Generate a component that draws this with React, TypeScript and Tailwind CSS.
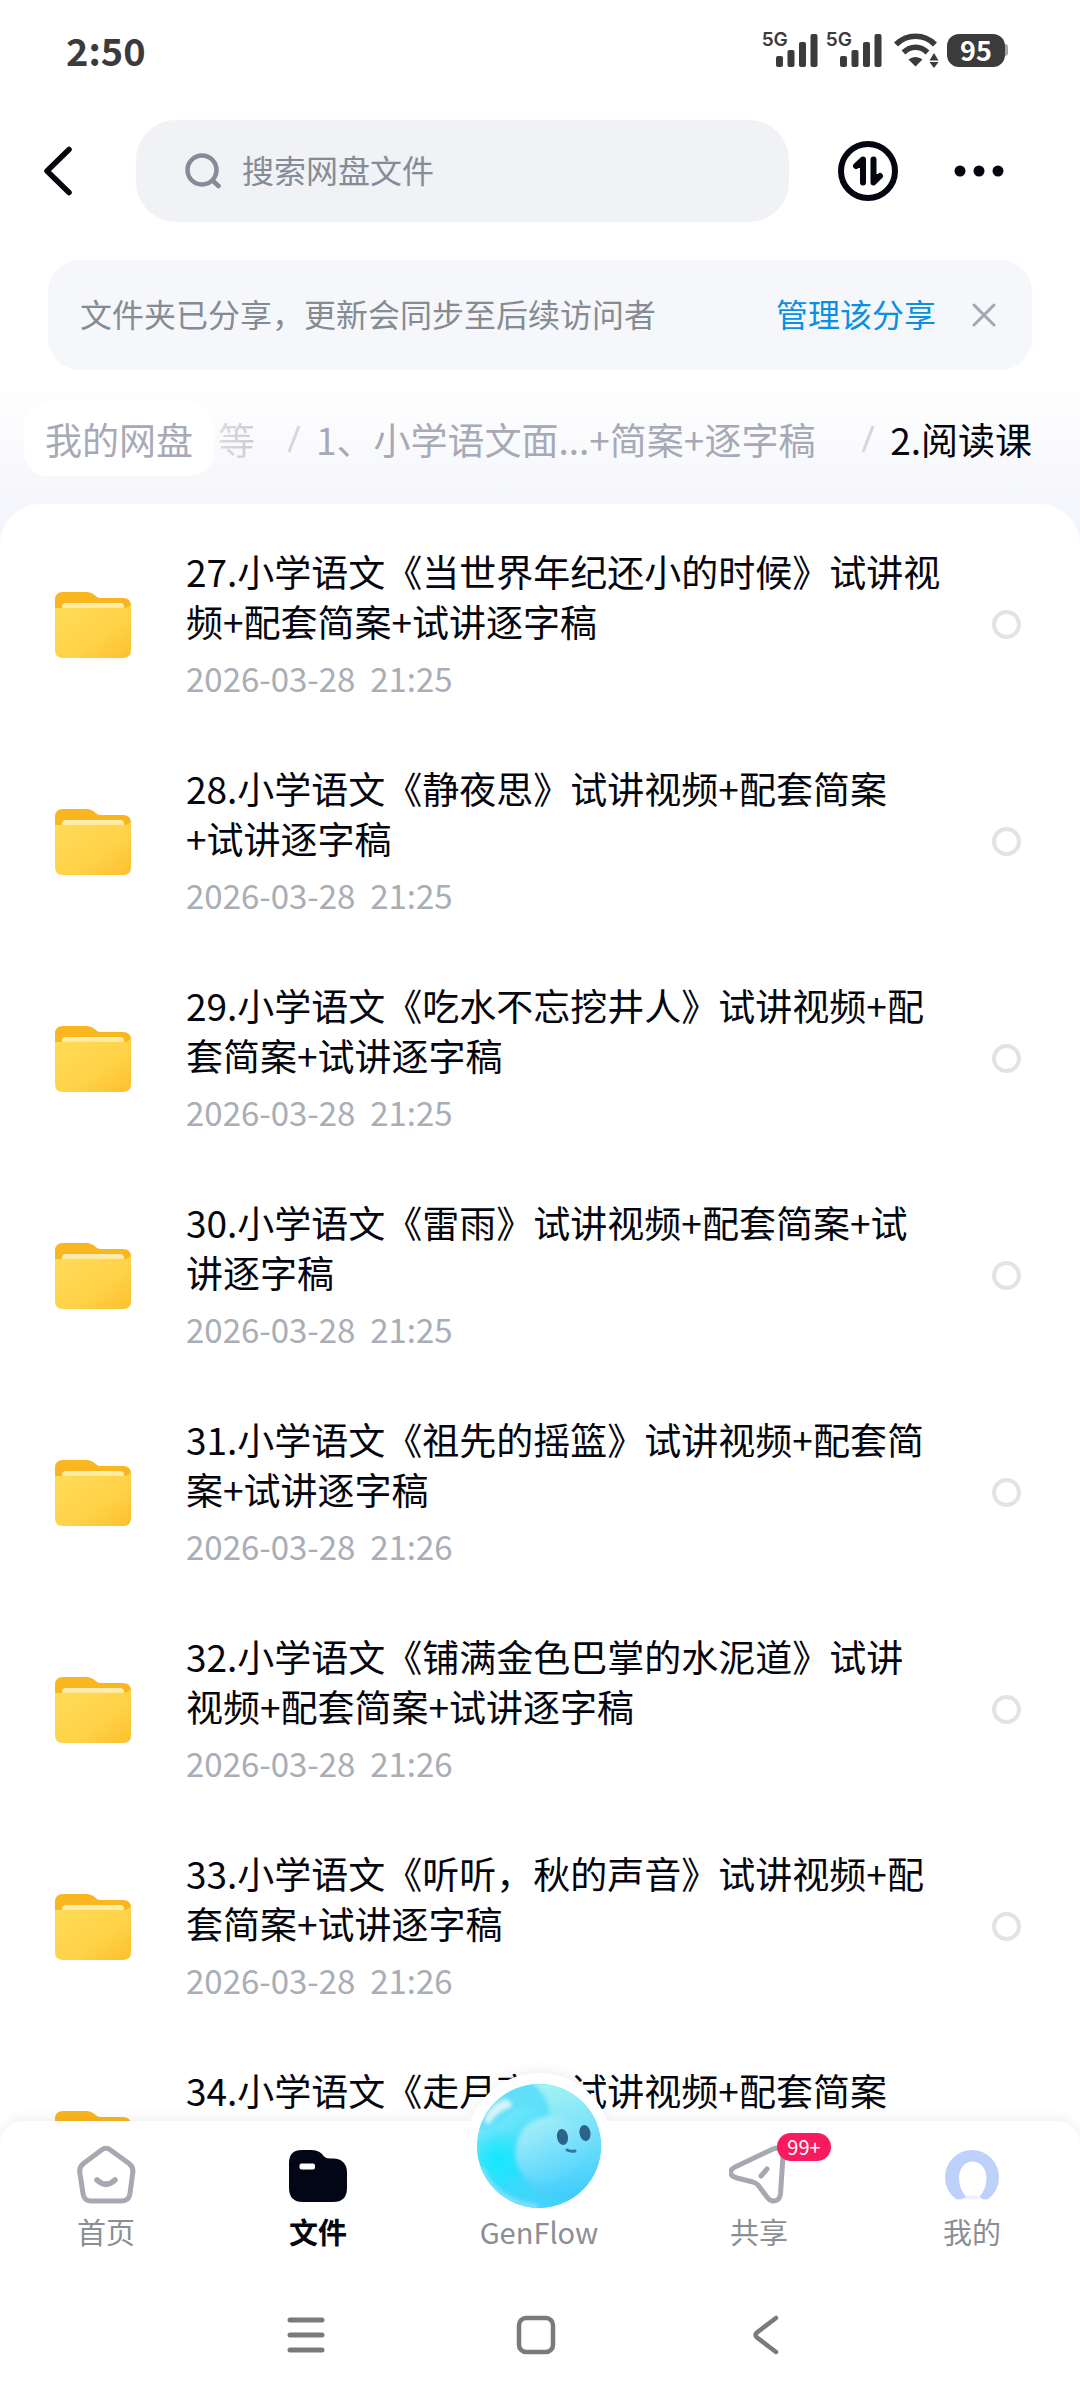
import { useState } from "react";

const files = [
  { id: 27, name: "27.小学语文《当世界年纪还小的时候》试讲视频+配套简案+试讲逐字稿", time: "2026-03-28  21:25" },
  { id: 28, name: "28.小学语文《静夜思》试讲视频+配套简案+试讲逐字稿", time: "2026-03-28  21:25" },
  { id: 29, name: "29.小学语文《吃水不忘挖井人》试讲视频+配套简案+试讲逐字稿", time: "2026-03-28  21:25" },
  { id: 30, name: "30.小学语文《雷雨》试讲视频+配套简案+试讲逐字稿", time: "2026-03-28  21:25" },
  { id: 31, name: "31.小学语文《祖先的摇篮》试讲视频+配套简案+试讲逐字稿", time: "2026-03-28  21:26" },
  { id: 32, name: "32.小学语文《铺满金色巴掌的水泥道》试讲\n视频+配套简案+试讲逐字稿", time: "2026-03-28  21:26" },
  { id: 33, name: "33.小学语文《听听，秋的声音》试讲视频+配套简案+试讲逐字稿", time: "2026-03-28  21:26" },
  { id: 34, name: "34.小学语文《走月亮》试讲视频+配套简案+试讲逐字稿", time: "2026-03-28  21:26" },
];

const Signal = () => (
  <div className="flex items-end">
    <span className="-mr-3 self-start font-['Inter'] text-[19px] leading-4 font-semibold">5G</span>
    <svg className="h-9 w-[42px]" viewBox="0 0 42 36" fill="currentColor">
      <rect x="0" y="24" width="7" height="11" rx="2" />
      <rect x="11.500" y="18" width="7" height="17" rx="2" />
      <rect x="23" y="10" width="7" height="25" rx="2" />
      <rect x="34.500" y="2" width="7" height="33" rx="2" />
    </svg>
  </div>
);

const StatusBar = () => (
  <div className="flex h-25 items-center justify-between pr-[72px] pl-[66px] text-[#3b3b3b]">
    <span className="text-[38px] leading-10 font-bold">2:50</span>
    <div className="flex items-center">
      <div className="flex gap-2">
        <Signal />
        <Signal />
      </div>
      <svg className="ml-3 h-9 w-[45px]" viewBox="0 0 45 36" fill="none" stroke="currentColor" strokeWidth="5.500">
        <path d="M2 12.500C13 1.500 30 1.500 41 12.500" />
        <path d="M9.500 20.500C16.500 13.500 26.500 13.500 33.500 20.500" />
        <path d="M14.500 27.500C19 24 24 24 28.500 27.500L21.500 34.500Z" fill="currentColor" stroke="none" />
        <path d="M35.500 28.500L40 21L44.500 28.500Z M35.500 30L40 36L44.500 30Z" fill="currentColor" stroke="none" />
      </svg>
      <div className="ml-2 flex items-center">
        <span className="flex h-[33px] w-[58px] items-center justify-center rounded-xl bg-[#3b3b3b] text-[27px] leading-8 font-bold text-white">
          95
        </span>
        <span className="h-3 w-[3px] rounded-r-sm bg-[#a5a5a5]" />
      </div>
    </div>
  </div>
);

const SearchRow = () => (
  <div className="mt-5 flex h-[102px] items-center pr-[72px] pl-9">
    <button type="button" aria-label="返回" className="flex h-16 w-11 items-center justify-center">
      <svg className="h-[50px] w-[30px]" viewBox="0 0 30 50" fill="none" stroke="#06070c" strokeWidth="5.500" strokeLinecap="round" strokeLinejoin="round">
        <path d="M26 3.500L4 25L26 46.500" />
      </svg>
    </button>
    <label className="ml-14 flex h-full flex-1 items-center rounded-[40px] bg-[#f0f2f6] pl-[49px]">
      <svg className="h-9 w-9" viewBox="0 0 36 36" fill="none" stroke="#868b96" strokeWidth="4.500" strokeLinecap="round">
        <circle cx="17" cy="17" r="14.500" />
        <path d="M27.500 27.500L33.500 33" />
      </svg>
      <input
        type="search"
        placeholder="搜索网盘文件"
        className="ml-[21px] w-full min-w-0 flex-1 bg-transparent pb-1 text-[32px] leading-10 outline-none placeholder:text-[#868b96]"
      />
    </label>
    <button type="button" aria-label="传输列表" className="ml-[49px]">
      <svg className="h-[60px] w-[60px]" viewBox="0 0 60 60" fill="none" stroke="#04060f" strokeLinecap="round" strokeLinejoin="round">
        <circle cx="30" cy="30" r="27" strokeWidth="6" />
        <path d="M25 41.500V18.500L18 25" strokeWidth="6" />
        <path d="M22 20L25 17V26H18Z" fill="#04060f" strokeWidth="2" />
        <path d="M35.500 18.500V41.500L42 35" strokeWidth="6" />
        <path d="M38 40L35.500 42V34H42Z" fill="#04060f" strokeWidth="2" />
      </svg>
    </button>
    <button type="button" aria-label="更多" className="ml-[54px]">
      <svg className="h-[60px] w-14" viewBox="0 0 56 60" fill="#04060f">
        <circle cx="8" cy="30" r="5.500" />
        <circle cx="27" cy="30" r="5.500" />
        <circle cx="46" cy="30" r="5.500" />
      </svg>
    </button>
  </div>
);

const ShareBanner = () => (
  <div className="mx-12 mt-[38px] flex h-[110px] items-center rounded-[32px] bg-[#f5f7fa] pr-[36px] pl-8 text-[32px] leading-10">
    <p className="flex-1 pb-1 text-[#868b93]">文件夹已分享，更新会同步至后续访问者</p>
    <a href="#share" className="pb-1 text-[#0a8fe6]">管理该分享</a>
    <button type="button" aria-label="关闭" className="ml-9">
      <svg className="h-6 w-6" viewBox="0 0 24 24" fill="none" stroke="#a3a7b2" strokeWidth="3" strokeLinecap="round">
        <path d="M2 2L22 22M22 2L2 22" />
      </svg>
    </button>
  </div>
);

const Slash = () => (
  <svg className="h-7 w-3.5 shrink-0" viewBox="0 0 14 28" fill="none" stroke="#d5d7de" strokeWidth="3">
    <path d="M12 1L2 27" />
  </svg>
);

const Breadcrumb = () => (
  <nav className="mt-2 flex h-[126px] items-center bg-linear-to-b from-white to-[#f5f6fb] pr-12 pb-1 pl-6 text-[37px] leading-[50px] whitespace-nowrap text-[#a7aab6]">
    <a href="#root" className="rounded-3xl bg-white px-[21px] py-3">我的网盘</a>
    <span className="bg-linear-to-r from-[#dcdde2] to-[#cbcdd4] bg-clip-text pl-1 text-transparent">等</span>
    <div className="flex flex-1 items-center justify-between pl-8">
      <Slash />
      <a href="#parent">1、小学语文面...+简案+逐字稿</a>
      <span className="w-4" />
      <Slash />
      <span className="text-[#05060e]">2.阅读课</span>
    </div>
  </nav>
);

const FolderIcon = () => (
  <svg className="h-[68px] w-[76px] shrink-0" viewBox="0 0 76 68">
    <defs>
      <linearGradient id="folder-front" x1="0" y1="0" x2="1" y2="1">
        <stop offset="0" stopColor="#ffdc58" />
        <stop offset="0.600" stopColor="#ffd248" />
        <stop offset="1" stopColor="#fcc02c" />
      </linearGradient>
      <linearGradient id="folder-paper" x1="0" y1="0" x2="0" y2="1">
        <stop offset="0" stopColor="#fff0b8" />
        <stop offset="1" stopColor="#ffdf74" />
      </linearGradient>
    </defs>
    <path d="M0 22V9Q0 1 8 1H32Q36 1 39 3.500L42 6Q43.500 7 46 7H68Q76 7 76 15V24H0Z" fill="#fab61e" />
    <path d="M7 22V16Q7 12 11 12H65Q69 12 69 16V22Z" fill="url(#folder-paper)" />
    <path d="M0 17H68Q74 17 76 13V59Q76 67 68 67H8Q0 67 0 59Z" fill="url(#folder-front)" />
  </svg>
);

const FileRow = ({ id, name, time }: { id: number; name: string; time: string }) => (
  <li className="flex items-center py-[30px] pr-[59px] pl-[55px]">
    <FolderIcon />
    <div className="ml-[55px] min-w-0 flex-1 pb-1">
      <label htmlFor={`file-${id}`} className="block text-[37px] leading-[50px] whitespace-pre-line text-[#05060e]">{name}</label>
      <p className="mt-3 text-[33px] leading-[41px] whitespace-pre text-[#a9adb5]">{time}</p>
    </div>
    <input
      id={`file-${id}`}
      type="checkbox"
      className="ml-12 h-[29px] w-[29px] shrink-0 appearance-none rounded-full border-4 border-[#e3e3e3] checked:border-[#0a8fe6] checked:bg-[#0a8fe6]"
    />
  </li>
);

const HomeIcon = () => (
  <svg className="h-15 w-15" viewBox="0 0 60 60" fill="none" stroke="#a6a9b2" strokeWidth="5" strokeLinecap="round" strokeLinejoin="round">
    <path d="M25.500 5Q30 1.500 34.500 5L53 18.500Q57.500 22 56.800 27.500L54 48.500Q53 56 45.500 56H15Q8 56 7 48.500L3.800 27.500Q3 22 7.500 18.500Z" />
    <path d="M21 35Q30 43.500 39 35" strokeWidth="5.500" />
  </svg>
);

const FilesIcon = () => (
  <svg className="h-15 w-15" viewBox="0 0 60 60">
    <path d="M1 18Q1 5 14 5H23Q30 5 34 9L36 11.500Q38 13.500 42 13.500H45Q59 14 59 28V43Q59 57 45 57H15Q1 57 1 43Z" fill="#030614" />
    <rect x="11.500" y="18.500" width="15.500" height="6" rx="2" fill="#fff" />
  </svg>
);

const ShareIcon = () => (
  <svg className="h-15 w-15" viewBox="0 0 60 60" fill="none" stroke="#a6a9b2" strokeWidth="5" strokeLinecap="round" strokeLinejoin="round">
    <path d="M6 22L44 4Q54 0 54 11L51.500 49Q50.500 56 44.500 56Q41 56 38 52L29 40Q27 38 24 37L8 33Q1.500 31 1.500 27Q2 24 6 22Z" />
    <path d="M32 31L38 24" />
  </svg>
);

const ProfileIcon = () => (
  <svg className="h-15 w-15" viewBox="0 0 60 60">
    <path d="M20 53Q30 47 40 53Q30 56 20 53Z" fill="#edf1fb" />
    <path d="M14 54Q3 46 3 32A27 27 0 0 1 57 32Q57 46 46 54Q41 56 37.500 51.500Q44.500 44 44.500 33C44.500 23 38 16.500 30.500 16.500S17 23 17 33Q17 44 24 51.500Q19 56 14 54Z" fill="#bdd1fa" />
  </svg>
);

const GenFlowOrb = () => (
  <svg className="h-[150px] w-[150px]" viewBox="0 0 150 150">
    <defs>
      <linearGradient id="orb-base" x1="0.150" y1="0.100" x2="0.800" y2="1">
        <stop offset="0" stopColor="#9bedfc" />
        <stop offset="0.500" stopColor="#35dcfb" />
        <stop offset="1" stopColor="#4fcbfb" />
      </linearGradient>
      <linearGradient id="orb-body" x1="0.300" y1="0" x2="0.500" y2="1">
        <stop offset="0" stopColor="#a6f3f4" />
        <stop offset="0.500" stopColor="#76e0fa" />
        <stop offset="1" stopColor="#3dccfd" />
      </linearGradient>
      <linearGradient id="orb-face" x1="0" y1="0" x2="0.600" y2="1">
        <stop offset="0" stopColor="#b4f3fa" />
        <stop offset="1" stopColor="#5fd8fc" stopOpacity="0.300" />
      </linearGradient>
      <radialGradient id="orb-glow">
        <stop offset="0" stopColor="#12e9fd" />
        <stop offset="1" stopColor="#12e9fd" stopOpacity="0" />
      </radialGradient>
      <clipPath id="orb-clip">
        <circle cx="75" cy="75" r="62" />
      </clipPath>
      <filter id="orb-soft">
        <feGaussianBlur stdDeviation="2" />
      </filter>
    </defs>
    <circle cx="75" cy="75" r="73" fill="#fff" />
    <g clipPath="url(#orb-clip)">
      <rect width="150" height="150" fill="url(#orb-base)" />
      <path d="M14 58Q28 60 40 48Q62 24 96 46V10H40Q16 20 14 58Z" fill="#5fdffa" filter="url(#orb-soft)" />
      <circle cx="34" cy="88" r="32" fill="url(#orb-glow)" />
      <path d="M66 10Q84 24 86 44Q68 46 58 60Q46 80 58 104Q76 132 112 130L150 90L130 10Z" fill="url(#orb-body)" filter="url(#orb-soft)" />
      <path d="M52 82Q54 48 92 46Q116 50 128 70Q118 104 84 112Q54 110 52 82Z" fill="url(#orb-face)" filter="url(#orb-soft)" />
      <path d="M20 50Q26 32 42 28Q48 30 48 36Q36 38 24 54Z" fill="#d9f6fd" filter="url(#orb-soft)" />
      <path d="M16 96Q32 132 74 136" fill="none" stroke="#8fe0fb" strokeWidth="5" filter="url(#orb-soft)" />
    </g>
    <ellipse cx="98.500" cy="66" rx="5.500" ry="8" fill="#2b6488" transform="rotate(-10 98.500 66)" />
    <ellipse cx="121" cy="62" rx="5.500" ry="8" fill="#2b6488" transform="rotate(-10 121 62)" />
    <path d="M103 79Q107 81 111 80" fill="none" stroke="#2b7a9f" strokeWidth="3" strokeLinecap="round" />
  </svg>
);

const tabs = [
  { id: "home", label: "首页", icon: <HomeIcon /> },
  { id: "files", label: "文件", icon: <FilesIcon /> },
  { id: "genflow", label: "GenFlow", icon: <GenFlowOrb /> },
  { id: "share", label: "共享", icon: <ShareIcon />, badge: "99+" },
  { id: "mine", label: "我的", icon: <ProfileIcon /> },
];

const TabBar = () => {
  const [active, setActive] = useState("files");

  return (
    <nav className="grid grid-cols-[212fr_212fr_230fr_210fr_216fr] pt-6">
      {tabs.map((tab) => (
        <button key={tab.id} type="button" onClick={() => setActive(tab.id)} className="flex flex-col items-center">
          <span className="relative flex h-15 w-15 items-end justify-center">
            {tab.id === "genflow" ? <span className="absolute -bottom-4">{tab.icon}</span> : tab.icon}
            {tab.badge && (
              <span className="absolute -top-3 left-12 flex h-7 w-[54px] items-center justify-center rounded-full bg-[#fb1a5f] text-[20px] leading-7 text-white">
                {tab.badge}
              </span>
            )}
          </span>
          <span className={active === tab.id ? "mt-2 text-[29px] leading-9 font-bold text-[#05060e]" : "mt-2 text-[29px] leading-9 text-[#8b8e94]"}>
            {tab.label}
          </span>
        </button>
      ))}
    </nav>
  );
};

const SystemBar = () => (
  <div className="mt-[66px] flex justify-center gap-[190px] pr-2 pb-[46px]">
    <button type="button" aria-label="最近任务">
      <svg className="h-10 w-10" viewBox="0 0 40 40" fill="none" stroke="#7a7a7a" strokeWidth="5" strokeLinecap="round">
        <path d="M4 5H36M4 20H36M4 35H36" />
      </svg>
    </button>
    <button type="button" aria-label="主屏幕">
      <svg className="h-10 w-10" viewBox="0 0 40 40" fill="none" stroke="#7a7a7a" strokeWidth="4.500">
        <rect x="3" y="3" width="34" height="34" rx="7" />
      </svg>
    </button>
    <button type="button" aria-label="返回上一页">
      <svg className="h-10 w-10" viewBox="0 0 40 40" fill="none" stroke="#7a7a7a" strokeWidth="4.500" strokeLinecap="round" strokeLinejoin="round">
        <path d="M30 3L11 17.500Q8 20 11 22.500L30 37" />
      </svg>
    </button>
  </div>
);

export default function App() {
  return (
    <div className="flex h-screen flex-col overflow-hidden bg-white font-['Noto_Sans_CJK_SC',sans-serif]">
      <header>
        <StatusBar />
        <SearchRow />
        <ShareBanner />
        <Breadcrumb />
      </header>

      <main className="min-h-0 flex-1 bg-[#f5f6fb]">
        <ul className="h-full overflow-y-auto rounded-t-[40px] bg-white pt-3 [scrollbar-width:none]">
          {files.map((file) => (
            <FileRow key={file.id} {...file} />
          ))}
        </ul>
      </main>

      <footer className="relative z-10 rounded-t-3xl bg-white drop-shadow-[0_-3px_6px_rgba(0,0,0,0.06)]">
        <TabBar />
        <SystemBar />
      </footer>
    </div>
  );
}
